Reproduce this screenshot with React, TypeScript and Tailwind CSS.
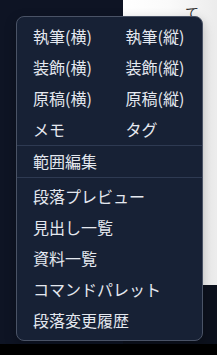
import React from "react";

const grid = [
  ["執筆(横)", "執筆(縦)"],
  ["装飾(横)", "装飾(縦)"],
  ["原稿(横)", "原稿(縦)"],
  ["メモ", "タグ"],
];

const list = ["段落プレビュー", "見出し一覧", "資料一覧", "コマンドパレット", "段落変更履歴"];

export default function App() {
  return (
    <div
      className="relative w-[217px] h-[355px] overflow-hidden bg-[#0e1424]"
      style={{ fontFamily: '"Noto Sans CJK JP", "Noto Sans", sans-serif' }}
    >
      <div className="flex flex-col h-full">
        <div className="flex h-[344px]">
          <div className="w-[123px] bg-[#0e1424]" />
          <div className="flex-1 flex flex-col">
            <div className="h-[285px] bg-gradient-to-r from-white via-[#fafafa] to-[#ececec] relative">
              <span className="absolute left-[62px] top-[4px] text-[14px] leading-[16px] text-[#333]">て</span>
            </div>
            <div className="flex-1 bg-[#0c111d]" />
          </div>
        </div>
        <div className="flex-1 bg-black" />
      </div>

      <div className="absolute left-[16px] top-[16px] w-[187px] rounded-lg border border-[#4a5366] bg-[#172135] text-[#e4e8ef] text-[16px] shadow-[0_4px_12px_rgba(0,0,0,0.25)]">
        <div className="grid grid-cols-2 pt-1">
          {grid.flat().map((t) => (
            <div key={t} className="px-4 leading-[23px] py-1 whitespace-nowrap">
              {t}
            </div>
          ))}
        </div>
        <div className="h-px bg-[#2e3a52]" />
        <div className="px-4 leading-[23px] py-1">範囲編集</div>
        <div className="h-px bg-[#2e3a52]" />
        <div className="pt-[3px] pb-1">
          {list.map((t) => (
            <div key={t} className="px-4 leading-[23px] py-1 whitespace-nowrap">
              {t}
            </div>
          ))}
        </div>
      </div>
    </div>
  );
}
